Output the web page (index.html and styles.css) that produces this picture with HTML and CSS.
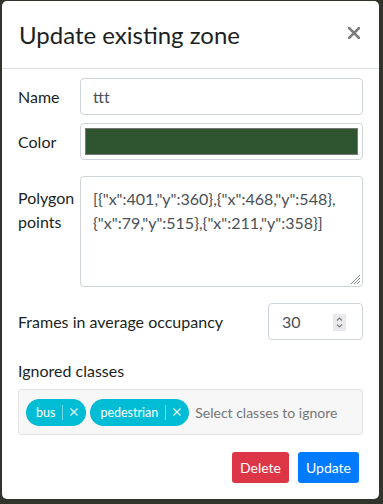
FILE: index.html
```html
<!DOCTYPE html>
<html lang="en">
<head>
<meta charset="utf-8">
<title>Update existing zone</title>
<link rel="stylesheet" href="styles.css">
</head>
<body>
<div class="modal">
  <div class="modal-header">
    <h5 class="modal-title">Update existing zone</h5>
    <button class="close" type="button" aria-label="Close">
      <svg width="12" height="12" viewBox="0 0 12 12"><path d="M1 1L11 11M11 1L1 11" stroke="#7c7c7c" stroke-width="2.6" stroke-linecap="square"/></svg>
    </button>
  </div>
  <div class="modal-body">
    <div class="row row-name">
      <label class="lbl">Name</label>
      <input class="field" type="text" value="ttt">
    </div>
    <div class="row row-color">
      <label class="lbl">Color</label>
      <div class="field color-field"><div class="swatch"></div></div>
    </div>
    <div class="row row-poly">
      <label class="lbl lbl-top">Polygon points</label>
      <div class="area-wrap">
        <textarea class="field area">[{"x":401,"y":360},{"x":468,"y":548},{"x":79,"y":515},{"x":211,"y":358}]</textarea>
        <svg class="grip" width="12" height="12" viewBox="0 0 12 12"><path d="M11 2L2 11M11 5L5 11M11 8L8 11" stroke="#8a8a8a" stroke-width="1"/></svg>
      </div>
    </div>
    <div class="row row-frames">
      <label class="lbl">Frames in average occupancy</label>
      <div class="field num-field">
        <span class="num-val">30</span>
        <svg class="spin" width="13" height="17" viewBox="0 0 13 17"><rect width="13" height="17" fill="#e9e9ed"/><path d="M4 6.5L6.5 4L9 6.5M4 10.5L6.5 13L9 10.5" fill="none" stroke="#7a7a7a" stroke-width="1.1"/></svg>
      </div>
    </div>
    <div class="ign-label">Ignored classes</div>
    <div class="multi">
      <span class="tag"><span class="tag-text">bus</span><span class="tag-sep"></span><svg class="tag-x" width="8" height="8" viewBox="0 0 8 8"><path d="M0.5 0.5L7.5 7.5M7.5 0.5L0.5 7.5" stroke="#e6f8fb" stroke-width="1.3"/></svg></span>
      <span class="tag"><span class="tag-text">pedestrian</span><span class="tag-sep"></span><svg class="tag-x" width="8" height="8" viewBox="0 0 8 8"><path d="M0.5 0.5L7.5 7.5M7.5 0.5L0.5 7.5" stroke="#e6f8fb" stroke-width="1.3"/></svg></span>
      <span class="ph">Select classes to ignore</span>
    </div>
    <div class="footer">
      <button class="btn btn-danger" type="button">Delete</button>
      <button class="btn btn-primary" type="button">Update</button>
    </div>
  </div>
</div>
</body>
</html>
```
FILE: styles.css
```css
html, body {
  margin: 0;
  padding: 0;
}
body {
  background: #30342d;
  width: 383px;
  height: 504px;
  overflow: hidden;
  font-family: "Lato", "Open Sans", sans-serif;
  color: #1c1f22;
}
.modal {
  margin: 1px 0 0 2px;
  width: 377px;
  height: 498px;
  background: #fff;
  border-radius: 5px;
  box-sizing: border-box;
}
.modal-header {
  height: 68px;
  box-sizing: border-box;
  padding: 16px 19px 0 17px;
  border-bottom: 1px solid #dee2e6;
  display: flex;
  justify-content: space-between;
  align-items: flex-start;
}
.modal-title {
  margin: 0;
  font-size: 24px;
  font-weight: 400;
  line-height: 36px;
  color: #1c1f22;
}
.close {
  border: 0;
  background: none;
  padding: 0;
  margin-top: 10px;
  width: 12px;
  height: 12px;
  display: block;
}
.close svg { display: block; }
.modal-body {
  padding: 9px 16px 0 16px;
}
.row {
  display: grid;
  grid-template-columns: 62px 1fr;
  align-items: center;
}
.lbl {
  font-size: 16px;
  line-height: 24px;
}
.field {
  box-sizing: border-box;
  border: 1px solid #ced4da;
  border-radius: 4px;
  background: #fff;
  font-family: inherit;
  font-size: 16px;
  color: #495057;
  margin: 0;
}
input.field {
  height: 37px;
  padding: 0 12px;
  outline: none;
}
.row-color { margin-top: 8px; }
.color-field {
  height: 37px;
  padding: 4px;
}
.swatch {
  height: 100%;
  box-sizing: border-box;
  border: 1px solid #767676;
  background: #2e5530;
}
.row-poly {
  margin-top: 16px;
  align-items: start;
}
.lbl-top { padding-top: 10px; }
.area-wrap {
  position: relative;
}
.area {
  height: 111px;
  padding: 10px 12px;
  line-height: 24px;
  resize: none;
  outline: none;
  display: block;
  width: 100%;
}
.grip {
  position: absolute;
  right: 2px;
  bottom: 2px;
  pointer-events: none;
}
.row-frames {
  margin-top: 16px;
  grid-template-columns: 1fr 95px;
}
.num-field {
  height: 37px;
  display: flex;
  align-items: center;
  justify-content: space-between;
  padding: 0 16px 0 13px;
}
.num-val { line-height: 24px; }
.spin { display: block; margin-top: 1px; }
.ign-label {
  margin-top: 19px;
  font-size: 16px;
  line-height: 24px;
}
.multi {
  margin-top: 6px;
  height: 46px;
  box-sizing: border-box;
  border: 1px solid #e3e3e3;
  border-radius: 3px;
  background: #f7f7f7;
  display: flex;
  align-items: center;
  padding: 0 7px;
  gap: 4px;
  white-space: nowrap;
  overflow: hidden;
}
.tag {
  flex-shrink: 0;
  height: 27px;
  box-sizing: border-box;
  background: #00bcd4;
  border-radius: 14px;
  display: inline-flex;
  align-items: center;
  padding: 0 8px 0 10px;
  color: #fff;
  font-size: 12.5px;
}
.tag-sep {
  width: 1px;
  height: 15px;
  background: rgba(255,255,255,0.45);
  margin: 0 7px 0 7px;
}
.tag-x { display: block; }
.ph {
  margin-left: 2px;
  color: #757575;
  font-size: 14px;
}
.footer {
  margin-top: 17px;
  display: flex;
  justify-content: flex-end;
  gap: 9px;
  padding-right: 4px;
}
.btn {
  height: 31px;
  border: 0;
  border-radius: 3px;
  padding: 0 8px;
  font-family: inherit;
  font-size: 14px;
  color: #fff;
}
.btn-danger { background: #dc3545; }
.btn-primary { background: #007bff; }
```
